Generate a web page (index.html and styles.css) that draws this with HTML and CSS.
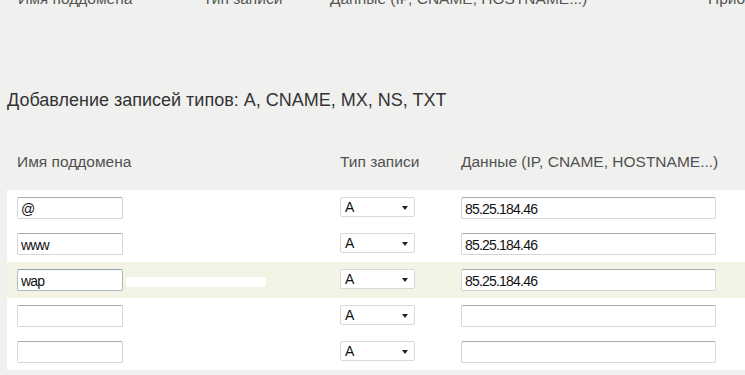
FILE: index.html
```html
<!DOCTYPE html>
<html lang="ru">
<head>
<meta charset="utf-8">
<title>DNS</title>
<link rel="stylesheet" href="styles.css">
</head>
<body>
<div class="prev-head">
  <div class="prev-inner">
    <span>Имя поддомена</span>
    <span>Тип записи</span>
    <span>Данные (IP, CNAME, HOSTNAME...)</span>
    <span>Приоритет</span>
  </div>
</div>

<h2 class="title">Добавление записей типов: A, CNAME, MX, NS, TXT</h2>

<div class="records">
  <div class="thead">
    <span>Имя поддомена</span>
    <span>Тип записи</span>
    <span>Данные (IP, CNAME, HOSTNAME...)</span>
  </div>
  <div class="row">
    <div class="c1"><input class="field name" value="@"></div>
    <div class="c2"><div class="select"><span>A</span><i class="arrow"></i></div></div>
    <div class="c3"><input class="field data" value="85.25.184.46"></div>
  </div>
  <div class="row">
    <div class="c1"><input class="field name" value="www"></div>
    <div class="c2"><div class="select"><span>A</span><i class="arrow"></i></div></div>
    <div class="c3"><input class="field data" value="85.25.184.46"></div>
  </div>
  <div class="row hl">
    <div class="c1"><input class="field name focus" value="wap"><span class="blot"></span></div>
    <div class="c2"><div class="select"><span>A</span><i class="arrow"></i></div></div>
    <div class="c3"><input class="field data" value="85.25.184.46"></div>
  </div>
  <div class="row">
    <div class="c1"><input class="field name" value=""></div>
    <div class="c2"><div class="select"><span>A</span><i class="arrow"></i></div></div>
    <div class="c3"><input class="field data" value=""></div>
  </div>
  <div class="row">
    <div class="c1"><input class="field name" value=""></div>
    <div class="c2"><div class="select"><span>A</span><i class="arrow"></i></div></div>
    <div class="c3"><input class="field data" value=""></div>
  </div>
</div>
</body>
</html>
```
FILE: styles.css
```css
html, body {
  margin: 0;
  padding: 0;
}
body {
  background: #f0f1ef;
  font-family: "Liberation Sans", Arial, sans-serif;
  color: #333;
  width: 745px;
  height: 375px;
  overflow: hidden;
}
.prev-head {
  height: 10px;
  overflow: hidden;
}
.prev-inner {
  display: grid;
  grid-template-columns: 185px 127px 378px auto;
  padding-left: 18px;
  margin-top: -10px;
  font-size: 15.5px;
  line-height: 17px;
  color: #555;
  white-space: nowrap;
}
.title {
  margin: 80px 0 0 7px;
  font-size: 18px;
  line-height: 21px;
  font-weight: normal;
  color: #333;
}
.records {
  margin-left: 7px;
}
.thead {
  display: grid;
  grid-template-columns: 323px 121px auto;
  padding: 42px 0 20px 10px;
  font-size: 15.5px;
  line-height: 17px;
  color: #505050;
  white-space: nowrap;
}
.row {
  display: grid;
  grid-template-columns: 323px 121px auto;
  align-items: start;
  height: 36px;
  box-sizing: border-box;
  padding: 7px 0 0 10px;
  background: #ffffff;
}
.row.hl {
  background: #f3f3e6;
}
.c1 {
  display: flex;
  align-items: center;
}
.field {
  box-sizing: border-box;
  height: 22px;
  margin: 0;
  border: 1px solid #d6d6d6;
  border-top-color: #ababab;
  border-radius: 2px;
  background: #fff;
  font-family: "Liberation Sans", Arial, sans-serif;
  font-size: 14px;
  letter-spacing: -0.8px;
  color: #111;
  padding: 1px 3px 0;
  outline: none;
}
.field.name {
  width: 106px;
}
.field.focus {
  border-color: #a9bcc4;
  border-top-color: #8aa3ad;
}
.field.data {
  width: 255px;
}
.blot {
  display: block;
  width: 140px;
  height: 10px;
  margin: 4px 0 0 3px;
  background: #fff;
  border-radius: 3px;
}
.select {
  position: relative;
  box-sizing: border-box;
  width: 75px;
  height: 20px;
  border: 1px solid #d9d9d9;
  border-radius: 2px;
  background: #fff;
  font-size: 14px;
  line-height: 18px;
  color: #111;
  padding-left: 4px;
}
.arrow {
  position: absolute;
  right: 6px;
  top: 8px;
  width: 0;
  height: 0;
  border-left: 3px solid transparent;
  border-right: 3px solid transparent;
  border-top: 4px solid #222;
}
```
